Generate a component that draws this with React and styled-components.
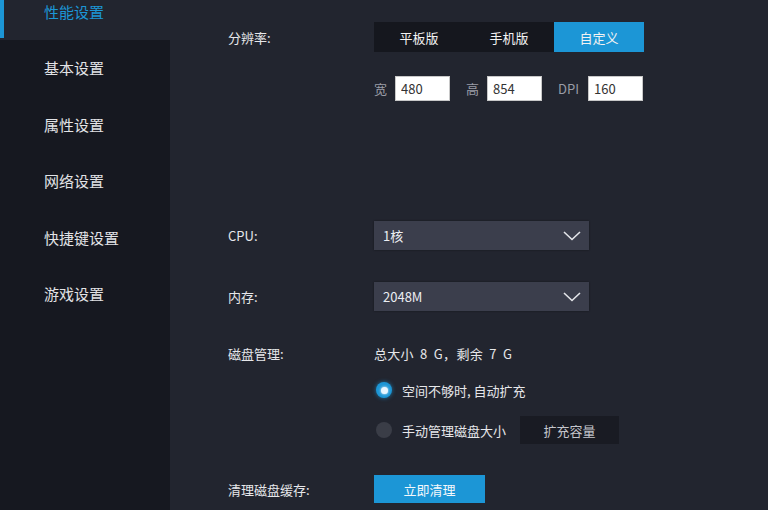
import React from 'react';
import styled, { createGlobalStyle } from 'styled-components';

const GlobalStyle = createGlobalStyle`
  html, body {
    margin: 0;
    padding: 0;
    background: #22252f;
    font-family: "Noto Sans CJK SC", "Noto Sans", "Liberation Sans", sans-serif;
  }
`;

const Page = styled.div`
  display: flex;
  width: 768px;
  height: 510px;
  overflow: hidden;
  background: #22252f;
`;

const Sidebar = styled.div`
  width: 170px;
  flex-shrink: 0;
  background: #161820;
  display: flex;
  flex-direction: column;
`;

const NavList = styled.ul`
  list-style: none;
  margin: -17px 0 0 0;
  padding: 0;
`;

const NavItem = styled.li`
  position: relative;
  height: 56.5px;
  display: flex;
  align-items: center;
  padding-left: 44px;
  font-size: 15px;
  color: ${p => (p.$active ? '#1c96d6' : '#e2e3e6')};
  background: ${p => (p.$active ? '#22252f' : 'transparent')};
  cursor: pointer;

  &::before {
    content: '';
    display: ${p => (p.$active ? 'block' : 'none')};
    position: absolute;
    left: 0;
    top: 0;
    bottom: 2px;
    width: 4px;
    background: #1c96d6;
  }
`;

const Main = styled.div`
  flex: 1;
  padding: 22px 0 0 58px;
  display: flex;
  flex-direction: column;
`;

const Row = styled.div`
  display: flex;
  align-items: center;
  margin-top: ${p => p.$mt || 0}px;
  min-height: ${p => p.$h || 20}px;
`;

const Label = styled.div`
  width: 146px;
  flex-shrink: 0;
  font-size: 13px;
  color: #e6e7ea;
`;

const Segmented = styled.div`
  display: flex;
  background: #15171e;
  height: 30px;
`;

const Segment = styled.button`
  width: 90px;
  height: 30px;
  border: none;
  font-family: inherit;
  font-size: 13px;
  color: #f2f2f2;
  background: ${p => (p.$active ? '#1c96d6' : 'transparent')};
  cursor: pointer;
`;

const SizeField = styled.label`
  display: flex;
  align-items: center;
  font-size: 13px;
  color: #9a9ca6;
  margin-right: 16px;

  &:last-child {
    margin-right: 0;
  }
`;

const SizeInput = styled.input`
  width: 55px;
  height: 25px;
  box-sizing: border-box;
  margin-left: ${p => p.$gap || 8}px;
  border: 1px solid #c8c8c8;
  background: #fff;
  padding: 0 5px;
  font-family: inherit;
  font-size: 13px;
  color: #333;
  outline: none;
`;

const Select = styled.div`
  width: 215px;
  height: 29px;
  box-sizing: border-box;
  background: #3b3e4c;
  display: flex;
  align-items: center;
  justify-content: space-between;
  padding: 0 8px 0 9px;
  font-size: 13px;
  color: #eceef2;
  box-shadow: 0 0 2px rgba(0, 0, 0, 0.4);
`;

const Text = styled.span`
  font-size: 13px;
  color: #e6e7ea;
  letter-spacing: 0.3px;
  word-spacing: 3px;
`;

const RadioRow = styled.label`
  display: flex;
  align-items: center;
  font-size: 13px;
  color: #e6e7ea;
  cursor: pointer;
`;

const RadioDot = styled.span`
  width: 16px;
  height: 16px;
  border-radius: 50%;
  margin: 0 10px 0 2px;
  box-sizing: border-box;
  background: ${p => (p.$checked ? '#1c96d6' : '#3a3d47')};
  box-shadow: ${p => (p.$checked ? '0 0 4px rgba(28,150,214,0.7)' : 'none')};
  display: flex;
  align-items: center;
  justify-content: center;

  &::after {
    content: '';
    display: ${p => (p.$checked ? 'block' : 'none')};
    width: 7px;
    height: 7px;
    border-radius: 50%;
    background: #e8f6ff;
    box-shadow: 0 0 3px #fff;
  }
`;

const DarkButton = styled.button`
  width: 99px;
  height: 28px;
  margin-left: 14px;
  border: none;
  background: #191b23;
  color: #c4c6cc;
  font-family: inherit;
  font-size: 13px;
  cursor: pointer;
`;

const BlueButton = styled.button`
  width: 111px;
  height: 28px;
  border: none;
  background: #1c96d6;
  color: #f4f8fb;
  font-family: inherit;
  font-size: 13px;
  cursor: pointer;
`;

const Chevron = () => (
  <svg width="18" height="10" viewBox="0 0 18 10" fill="none">
    <polyline points="1,1 9,8.5 17,1" stroke="#e4e6ea" strokeWidth="1.6" />
  </svg>
);

const navItems = ['性能设置', '基本设置', '属性设置', '网络设置', '快捷键设置', '游戏设置'];

export default function App() {
  const [mode, setMode] = React.useState('自定义');
  const [auto, setAuto] = React.useState(true);

  return (
    <Page>
      <GlobalStyle />
      <Sidebar>
        <NavList>
          {navItems.map((item, i) => (
            <NavItem key={item} $active={i === 0}>{item}</NavItem>
          ))}
        </NavList>
      </Sidebar>
      <Main>
        <Row $h={30}>
          <Label>分辨率:</Label>
          <Segmented>
            {['平板版', '手机版', '自定义'].map(m => (
              <Segment key={m} $active={mode === m} onClick={() => setMode(m)}>{m}</Segment>
            ))}
          </Segmented>
        </Row>
        <Row $mt={24} $h={25}>
          <Label />
          <SizeField>宽<SizeInput defaultValue="480" /></SizeField>
          <SizeField>高<SizeInput defaultValue="854" /></SizeField>
          <SizeField>DPI<SizeInput $gap={9} defaultValue="160" /></SizeField>
        </Row>
        <Row $mt={120} $h={29}>
          <Label>CPU:</Label>
          <Select>1核<Chevron /></Select>
        </Row>
        <Row $mt={32} $h={29}>
          <Label>内存:</Label>
          <Select>2048M<Chevron /></Select>
        </Row>
        <Row $mt={32} $h={20}>
          <Label>磁盘管理:</Label>
          <Text>总大小 8 G，剩余 7 G</Text>
        </Row>
        <Row $mt={17} $h={20}>
          <Label />
          <RadioRow onClick={() => setAuto(true)}>
            <RadioDot $checked={auto} />空间不够时, 自动扩充
          </RadioRow>
        </Row>
        <Row $mt={16} $h={28}>
          <Label />
          <RadioRow onClick={() => setAuto(false)}>
            <RadioDot $checked={!auto} />手动管理磁盘大小
          </RadioRow>
          <DarkButton>扩充容量</DarkButton>
        </Row>
        <Row $mt={31} $h={28}>
          <Label>清理磁盘缓存:</Label>
          <BlueButton>立即清理</BlueButton>
        </Row>
      </Main>
    </Page>
  );
}
